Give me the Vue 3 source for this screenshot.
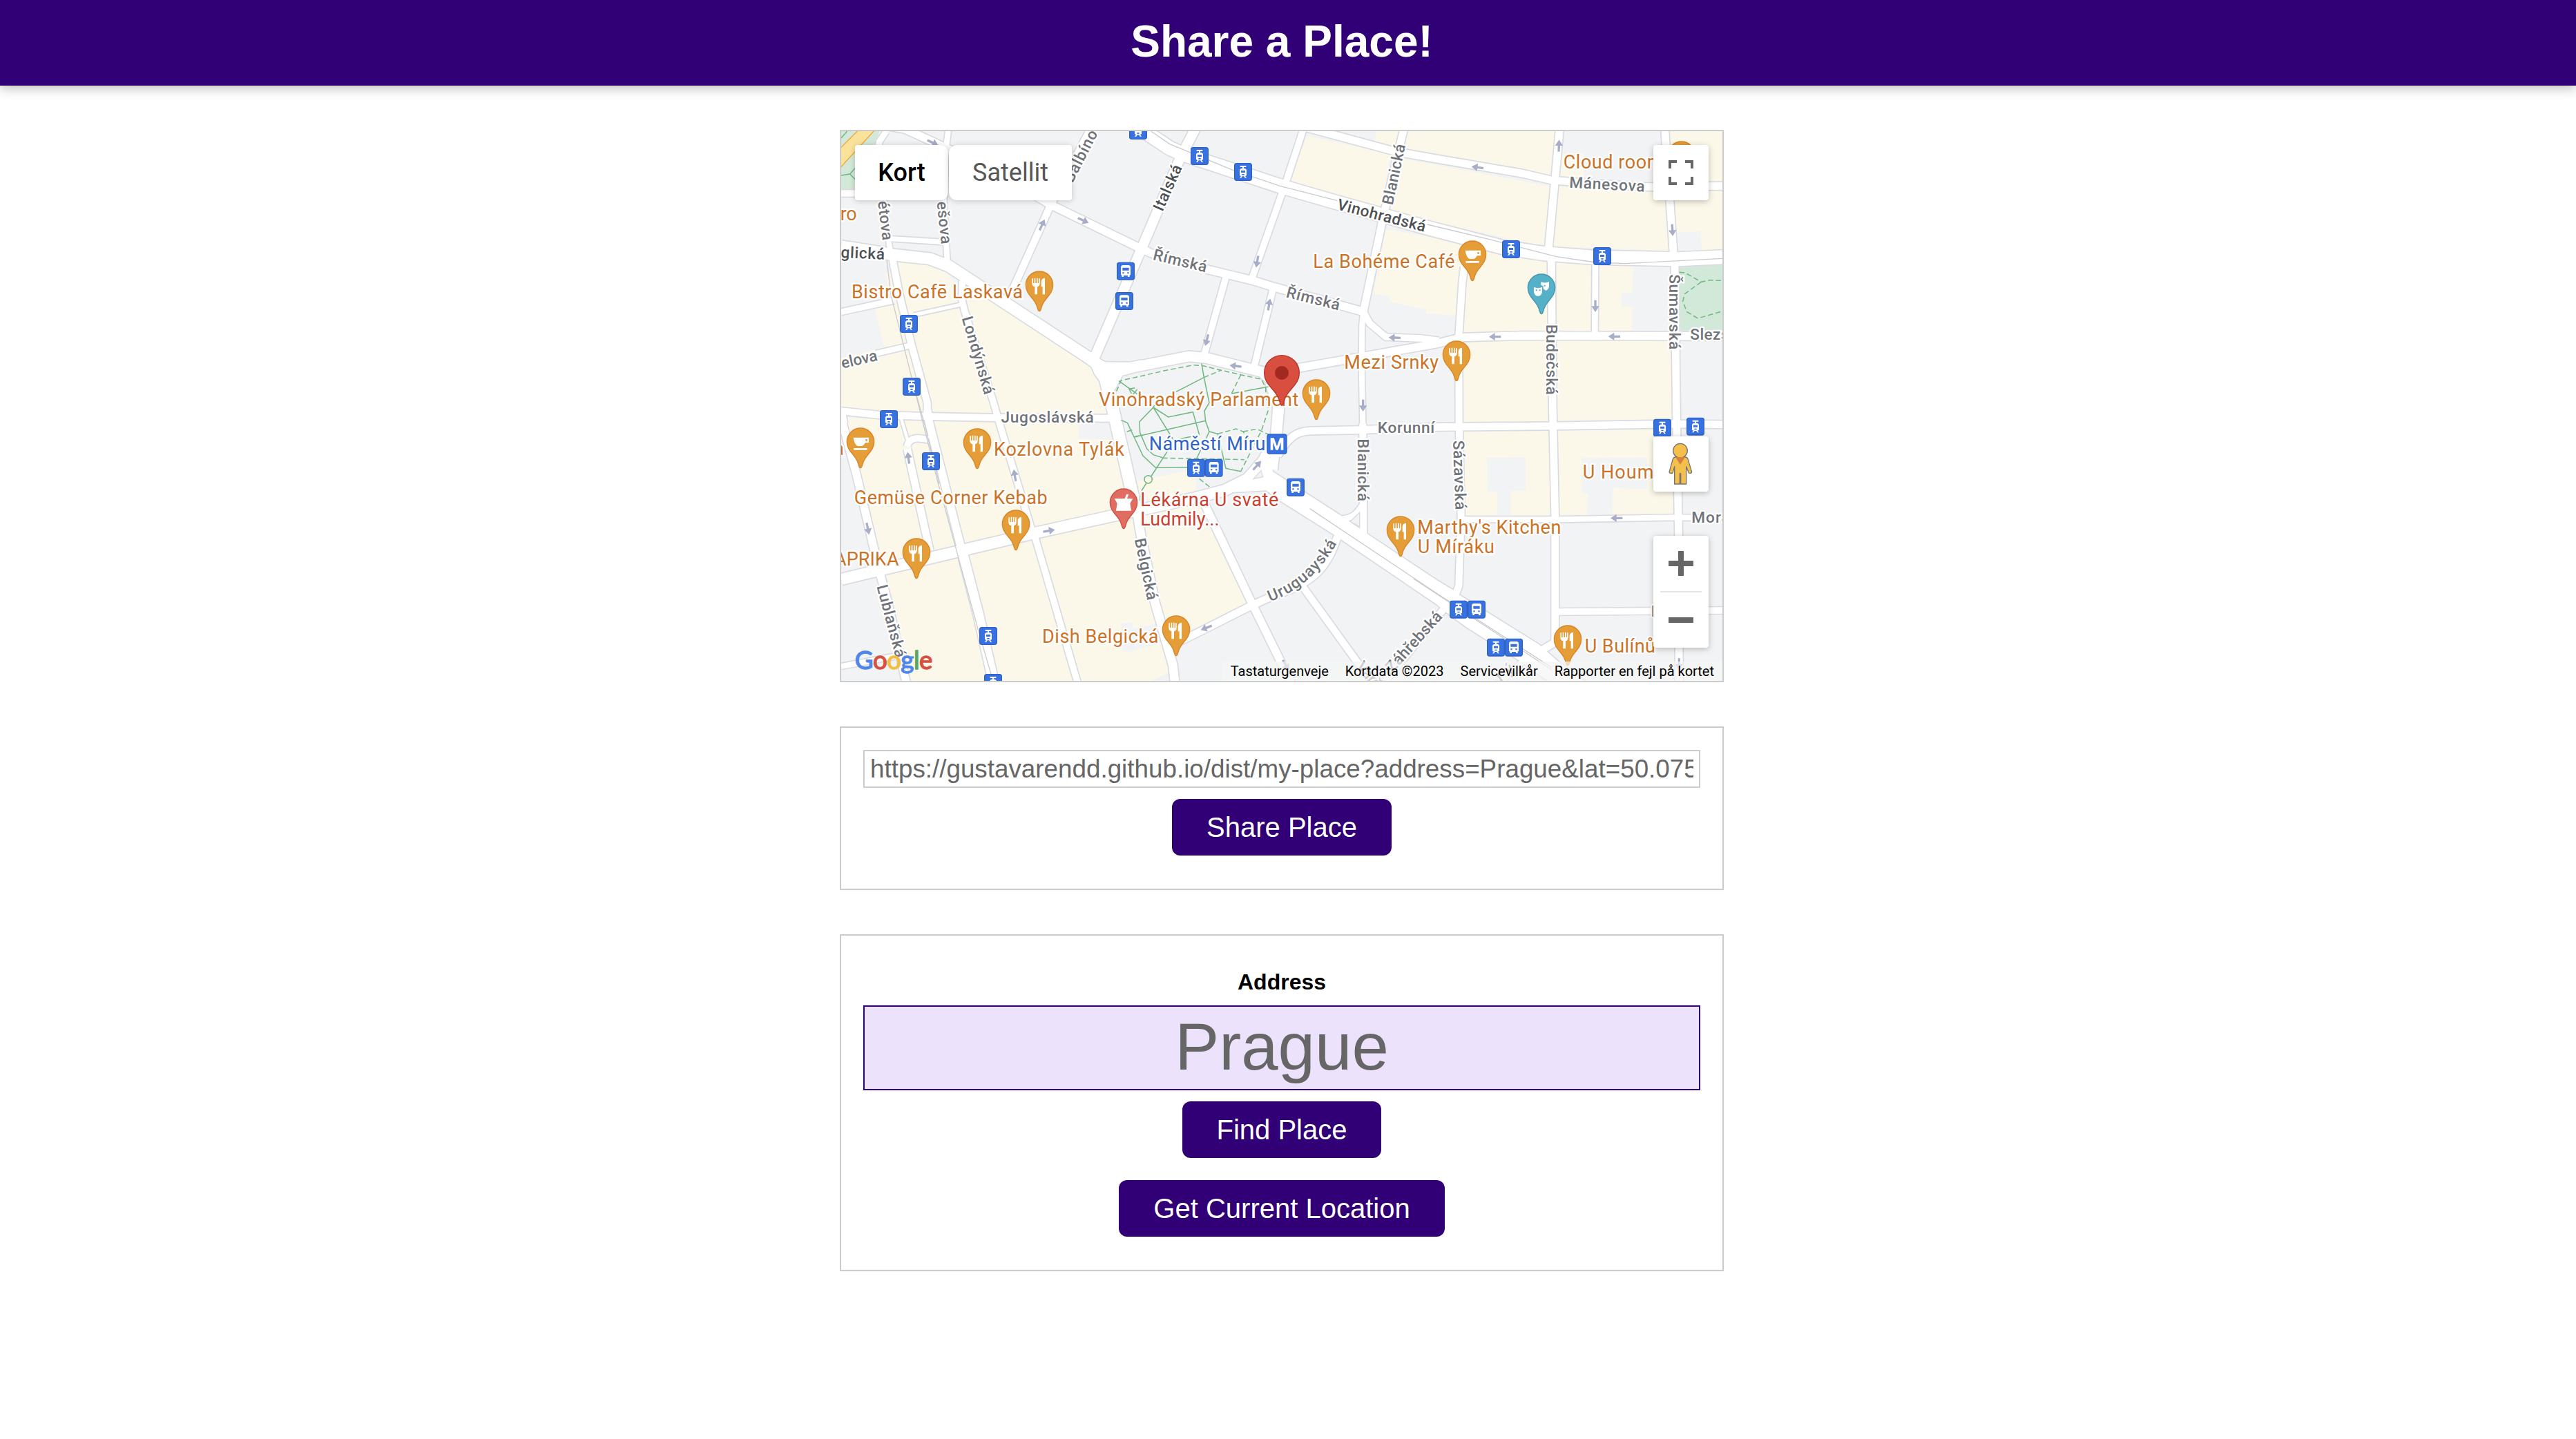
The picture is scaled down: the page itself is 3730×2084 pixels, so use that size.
<script setup>
import { ref } from 'vue'

const shareLink = ref('https://gustavarendd.github.io/dist/my-place?address=Prague&lat=50.0755381&lng=14.4378005')
const address = ref('Prague')

// Land use polygons: [kind, points]
const areas = [
  ['y', '265,598 405,612 480,637 520,700 560,690 1115,1060 1150,1130 1210,1260 1300,1650 1590,1640 1790,2075 1500,2225 1440,2270 1460,2340 1455,2380 1370,2418 300,2418 190,1960 150,1820 24,1300 24,1015 210,970 170,800 245,780 215,645 240,640'],
  ['y', '1310,1550 1530,1505 1565,1515 1565,1590 1320,1640'],
  ['y', '2050,50 2410,130 2370,370 1965,245'],
  ['y', '2350,30 2460,30 2440,110 2340,80'],
  ['y', '2490,30 3130,30 3105,230 2460,100'],
  ['y', '2440,145 3105,270 3080,530 2400,380'],
  ['y', '3140,270 3600,290 3640,550 3110,530'],
  ['y', '3140,130 3250,130 3250,240 3130,235'],
  ['y', '3620,30 3852,30 3852,255 3640,255'],
  ['y', '3640,285 3852,285 3852,545 3655,550'],
  ['y', '2390,455 2580,490 2880,560 3095,595 3090,900 2715,905 2695,832 2580,822 2565,825 2565,805 2405,770 2405,748 2335,735'],
  ['y', '3130,600 3280,612 3280,900 3130,900'],
  ['y', '3315,612 3465,618 3460,733 3415,733 3415,793 3460,793 3460,896 3315,896'],
  ['y', '2725,945 3097,940 3098,1297 2728,1297'],
  ['y', '3130,940 3635,940 3635,1285 3135,1292'],
  ['y', '2730,1335 3097,1332 3105,1697 2735,1697'],
  ['y', '3138,1330 3635,1325 3642,1693 3143,1697'],
  ['g', '24,30 190,30 165,120 85,282 24,282'],
  ['g', '3665,620 3852,610 3852,896 3670,896'],
  ['b', '3655,470 3758,465 3762,545 3658,550'],
  ['b', '2830,1448 2997,1446 2998,1593 2932,1593 2932,1697 2875,1697 2875,1597 2832,1597'],
  ['b', '3240,1450 3525,1448 3526,1585 3377,1580 3375,1697 3264,1697 3266,1602 3242,1602'],
  ['b', '24,1400 60,1320 100,1600 150,1820 180,1960 24,1960'],
  ['b', '24,2000 185,1965 300,2418 24,2418'],
  ['b', '1055,1300 1205,1292 1218,1370 1057,1365'],
  ['b', '1238,2172 1288,2162 1305,2285 1248,2296'],
  ['b', '1290,2190 1418,2165 1436,2250 1290,2285'],
  ['b', '50,1262 155,1268 155,1280 50,1275'],
]

// Streets: [inner width, path]
const roads = [
  [28, 'M24,300H110'],
  [26, 'M220,30 L190,75 L185,110'],
  [34, 'M240,10 L300,20 L500,112 L850,300 L935,350 L1305,530 L1370,560 L1620,632 L1810,678 L1900,706 L2295,815'],
  [24, 'M490,20 L480,100 L470,330 L485,600'],
  [22, 'M210,330 L232,520 L248,600'],
  [22, 'M235,497 L475,512'],
  [26, 'M24,815 L255,765'],
  [16, 'M340,828 L545,783'],
  [24, 'M175,996 L320,962'],
  [30, 'M248,590 L275,730 L330,960 L398,1210 L398,1260'],
  [34, 'M398,1240 L405,1290 L545,1840'],
  [44, 'M545,1840 L620,2130 L690,2440'],
  [30, 'M24,1246 L200,1264 L400,1269 L700,1275 L1200,1277'],
  [28, 'M550,680 L548,760 L560,810 L683,1200 L715,1310 L848,1750 L868,1800 L1055,2440'],
  [26, 'M30,1255 L38,1300'],
  [34, 'M30,1300 L90,1520 L175,1880 L195,1960 L225,2070 L310,2440'],
  [13, 'M285,1280 L312,1370'],
  [32, 'M311,1410 L408,1850'],
  [28, 'M311,1400 C315,1370 340,1364 360,1364 L405,1370'],
  [24, 'M24,2355 L290,2305'],
  [30, 'M1120,-5 L932,355 L757,745'],
  [42, 'M1562,20 L1495,150 L1333,530 L1125,1012'],
  [28, 'M2032,20 L1955,255 L1810,665'],
  [28, 'M1695,665 L1600,1005'],
  [28, 'M1900,715 L1815,1065'],
  [32, 'M2030,10 L2060,18 L2430,118 L2610,150 L2980,213 L3110,243 L3300,258 L3520,272 L3852,268'],
  [32, 'M2468,20 L2378,405 L2293,812'],
  [24, 'M2293,812 L2287,870 L2285,1050 L2290,1300'],
  [30, 'M2290,1300 L2293,1790'],
  [26, 'M2288,1655 C2260,1700 2240,1710 2200,1716'],
  [28, 'M2293,815 L2320,865 L2390,924 L2540,930 L2620,940'],
  [34, 'M1850,1073 L2015,1058 L2610,953 L2720,926 L2980,918 L3852,921'],
  [30, 'M2730,620 L2722,690 L2707,920 L2708,1300 L2717,1700 L2707,2005 L2690,2050'],
  [32, 'M3145,20 L3125,240 L3097,540 L3109,600 L3115,1230 L3125,1700 L3125,2250 L3060,2290'],
  [26, 'M3300,600 L3298,910'],
  [32, 'M3602,20 L3638,540 L3645,620 L3652,1230 L3662,1800 L3664,2440'],
  [32, 'M1920,1440 C1970,1350 2010,1335 2060,1332 L2270,1328 L2620,1315 L3100,1311 L3630,1302 L3852,1304'],
  [24, 'M2717,1717 L3140,1717 L3640,1708 L3852,1710'],
  [28, 'M3130,2118 L3852,2112'],
  [34, 'M1598,1640 L1808,2080 L1985,2440'],
  [32, 'M2180,1790 C2140,1920 2080,1985 1940,2035 C1800,2085 1700,2150 1450,2268'],
  [30, 'M2030,2010 L2290,2370 L2340,2440'],
  [30, 'M2650,2095 L2610,2145 L2370,2440'],
  [26, 'M2990,2330 L2870,2440'],
  [60, 'M1290,-10 L1340,30 L1450,103 L1510,130 L1930,268 L2160,335 L2580,452 L2900,535 L3080,562 L3290,578 L3660,586 L3852,577'],
  [50, 'M24,530 L215,560 L250,567 L408,584 L490,615 L1105,1018 L1160,1060'],
  [44, 'M1130,1055 L1290,1056 L1535,1008 L1610,1015 L1850,1075 L1890,1110'],
  [52, 'M1160,1060 L1205,1240 L1285,1590 L1300,1660'],
  [38, 'M1295,1600 L1325,1780 L1388,2080 L1465,2350 L1475,2440'],
  [48, 'M1890,1120 L1924,1230 L1915,1340 L1895,1500'],
  [48, 'M24,1977 L525,1857 L860,1777 L1290,1682 L1560,1624 L1690,1590 L1790,1540 L1860,1460 L1890,1400'],
]

// Wide intersections drawn as shapes
const plazas = [
  'M1880,1430 L1900,1510 L2195,1700 L2310,1780 L2610,1980 L2685,2025 L2710,2045 L3055,2260 L3100,2300 L3140,2335 L3270,2430 L3110,2430 L2970,2330 L2740,2185 L2645,2115 L2610,2085 L2160,1780 L1930,1635 L1870,1590 L1790,1595 L1700,1600 L1800,1520 Z',
  'M1105,990 L1145,1020 L1190,1042 L1240,1042 L1330,1024 L1330,1068 L1245,1092 L1215,1150 L1160,1170 L1150,1120 L1125,1085 L1110,1050 Z',
]

const rails = [
  'M222,590 L240,740 L365,1240 L440,1540 L530,1870 L620,2200 L690,2440',
  'M352,1180 L388,1310 L450,1560',
  'M1370,30 L1450,85 L1720,197 L1930,268 L2180,332 M2570,435 L2840,500 L3130,575 L3300,600 L3430,605 L3852,583',
  'M2060,1670 L2610,2037 L3110,2360',
  'M2512,1975 L2610,2040 L3110,2370',
]

const solidPaths = [
  'M24,60 L50,30 M24,222 L62,216 L85,190 M62,216 L85,240',
  'M1230,1115 L1310,1172 M1300,1145 L1275,1150 L1285,1170 M1310,1152 L1290,1175',
  'M1720,1170 L1880,1140 M1590,1040 L1600,1100 L1623,1210 L1602,1245 L1607,1290 L1623,1335 L1567,1455 M1600,1100 L1450,1177 L1375,1230',
  'M1380,1230 L1445,1272 L1552,1250 L1580,1350 L1468,1372 Z M1300,1358 L1608,1288 M1380,1230 L1320,1292 L1322,1340 L1352,1410 L1380,1436 L1420,1448',
  'M1240,1285 L1268,1298 L1285,1335 L1335,1440 L1390,1492 L1530,1490 M1445,1415 L1370,1530 M1265,1335 L1288,1328 M1298,1358 L1320,1352',
  'M1349,1560 L1330,1590 L1322,1635 M1375,1543 a17,17 0 1 0 -34,0 a17,17 0 1 0 34,0',
  'M1623,1335 L1660,1345 L1695,1495 L1760,1508',
]
const dashedPaths = [
  'M1220,1160 L1240,1113 L1300,1100 L1440,1068 L1555,1046 L1600,1050 L1680,1070 L1760,1088 L1850,1108 L1868,1145 L1870,1190 L1880,1240 L1850,1330 L1760,1508',
  'M1600,1100 L1675,1068 M1760,1088 L1720,1170',
  'M1420,1450 L1775,1457 M1660,1345 L1740,1323 L1770,1335 L1800,1380 M1770,1335 L1830,1324 L1890,1352 M1580,1540 L1630,1580',
  'M3665,643 L3690,645 L3760,685 L3795,677 L3852,679 M3760,685 L3688,737 L3680,770 L3698,815 L3745,843 L3842,815 L3852,825',
]

// One-way arrows: [x, y, angle]
const arrows = [
  [422, 80, 25], [1076, 418, 25], [897, 437, -65], [1831, 597, 100], [1883, 783, -80], [1612, 938, 105],
  [1737, 1050, 187], [2428, 927, 182], [3142, 93, -88], [2788, 187, 188], [3635, 460, 87], [3300, 790, 90],
  [2864, 923, 180], [3382, 922, 180], [2291, 1222, 90], [316, 1449, -98], [778, 1525, -100], [140, 1757, 78],
  [927, 1766, -10], [1831, 1482, -48], [1610, 2188, 158], [3392, 1711, 180], [3664, 2346, 90], [1955, 2350, 60],
]

// Street names centred on a point: [text, x, y, angle, length, major]
const streets = [
  ['étova', 217, 418, 83, 172], ['ešova', 473, 427, 84, 185], ['elova', 102, 1020, -13, 160],
  ['Londýnská', 620, 1003, 73.6, 350], ['Italská', 1441, 275, -66, 212, true], ['Blanická', 2424, 217, -78, 268],
  ['Vinohradská', 2372, 395, 14.5, 395, true], ['Římská', 1497, 592, 13.5, 238], ['Římská', 2075, 756, 14, 238],
  ['Mánesova', 3351, 260, 3, 328], ['Budečská', 3112, 1022, 90, 306], ['Šumavská', 3646, 815, 90, 327],
  ['Sázavská', 2711, 1524, 88, 302], ['Blanická', 2293, 1502, 90, 272], ['Korunní', 2478, 1316, 0, 247],
  ['Jugoslávská', 920, 1273, 0, 403], ['Belgická', 1350, 1932, 78, 272], ['Lublaňská', 243, 2158, 75, 324],
  ['Záhřebská', 2511, 2247, -48, 328], ['Balbíno', 1063, 137, -63, 245], ['glická', 118, 559, 2.5, 190, true],
  ['Slezs', 3796, 913, 0, 168], ['Mora', 3801, 1708, 0, 166], ['Varš', 2318, 2392, 50, 130], ['rý', 2905, 2380, -38, 80],
]

// Points of interest: [text, x, baseline, length, tone]
const places = [
  ['ro', 20, 417, 72], ['Bistro Cafē Laskavá', 69, 757, 744], ['Vinohradský Parlament', 1143, 1225, 868],
  ['La Bohéme Café', 2074, 625, 616], ['Mezi Srnky', 2209, 1061, 410], ['Cloud room', 3161, 193, 434],
  ['Kozlovna Tylák', 687, 1440, 567], ['Gemüse Corner Kebab', 80, 1651, 840], ['APRIKA', -6, 1918, 281],
  ['a', -8, 1436, 41], ['Dish Belgická', 897, 2254, 505], ["Marthy's Kitchen", 2527, 1779, 624],
  ['U Míráku', 2528, 1863, 334], ['U Houm', 3245, 1538, 308], ['U Bulínů', 3254, 2295, 307],
  ['Lékárna U svaté', 1324, 1659, 600, 'health'], ['Ludmily...', 1324, 1743, 343, 'health'],
  ['Náměstí Míru', 1361, 1416, 506, 'transit'],
]

const pins = [
  ['food', 885, 698], ['food', 2088, 1169], ['food', 2697, 1001], ['food', 615, 1382], ['food', 783, 1736],
  ['food', 351, 1859], ['food', 2454, 1763], ['food', 1479, 2195], ['food', 3180, 2237], ['food', 3674, 134],
  ['cafe', 2766, 566], ['cafe', 108, 1379], ['theatre', 3066, 710], ['pharmacy', 1251, 1643],
]

const stops = [
  ['tram', 318, 867], ['tram', 330, 1140], ['tram', 1314, 27], ['tram', 1581, 138], ['tram', 1770, 207],
  ['tram', 2934, 543], ['tram', 3330, 573], ['tram', 231, 1281], ['tram', 414, 1464], ['tram', 663, 2223],
  ['tram', 684, 2427], ['tram', 1566, 1493], ['tram', 3591, 1319], ['tram', 3735, 1313], ['tram', 2706, 2108],
  ['tram', 2868, 2273], ['bus', 1260, 638], ['bus', 1254, 768], ['bus', 1643, 1493], ['bus', 1998, 1577],
  ['bus', 2784, 2108], ['bus', 2946, 2273],
]

const logo = [['G', 'b'], ['o', 'r'], ['o', 'y'], ['g', 'b'], ['l', 'g'], ['e', 'r']]
const credits = ['Tastaturgenveje', 'Kortdata ©2023', 'Servicevilkår', 'Rapporter en fejl på kortet']
const pinShape = 'M0,114 C-5,114 -7,106 -9,98 C-18,56 -59,46 -59,0 A59,59 0 1 1 59,0 C59,46 18,56 9,98 C7,106 5,114 0,114Z'
</script>

<template>
  <div class="page">
    <header class="topbar"><h1>Share a Place!</h1></header>

    <main>
      <section class="map">
        <svg class="tiles" viewBox="24 30 3828 2388" width="1276" height="796">
          <defs>
            <path id="uruguayska" d="M1888,2074 C1990,2035 2100,1970 2200,1780" />
          </defs>
          <rect x="24" y="30" width="3828" height="2388" fill="#f1f3f4" />
          <polygon v-for="(a, i) in areas" :key="'a' + i" :points="a[1]" :class="'area-' + a[0]" />
          <path class="motorway" d="M10,114 L110,14 H180 L10,200Z" />

          <g class="casing">
            <path v-for="(r, i) in roads" :key="'c' + i" :d="r[1]" :stroke-width="r[0] + 10" />
            <path v-for="(p, i) in plazas" :key="'pc' + i" :d="p" stroke-width="10" />
          </g>
          <g class="street">
            <path v-for="(r, i) in roads" :key="'s' + i" :d="r[1]" :stroke-width="r[0]" />
          </g>
          <path v-for="(p, i) in plazas" :key="'p' + i" :d="p" fill="#fff" />
          <path class="island" d="M1815,1540 L1848,1505 L1856,1532Z M2236,1726 L2276,1686 V1748Z" />
          <path v-for="(r, i) in rails" :key="'r' + i" :d="r" class="rail" />
          <path v-for="(p, i) in solidPaths" :key="'gs' + i" :d="p" class="trail" />
          <path v-for="(p, i) in dashedPaths" :key="'gd' + i" :d="p" class="trail dashed" />

          <path v-for="(a, i) in arrows" :key="'w' + i" d="M-26,-5H0V-17L26,0L0,17V5H-26Z" fill="#a9aec8"
                :transform="`translate(${a[0]} ${a[1]}) rotate(${a[2]})`" />

          <text v-for="(s, i) in streets" :key="'n' + i" class="label street-name" :class="{ major: s[5] }"
                :transform="`translate(${s[1]} ${s[2]}) rotate(${s[3]})`" y="24" text-anchor="middle"
                :textLength="s[4]">{{ s[0] }}</text>
          <text class="label street-name"><textPath href="#uruguayska" textLength="392">Uruguayská</textPath></text>
          <text class="label street-name major" x="3543" y="2138">F</text>

          <text v-for="(p, i) in places" :key="'t' + i" class="label place" :class="p[4]" :x="p[1]" :y="p[2]"
                :textLength="p[3]">{{ p[0] }}</text>

          <g v-for="(s, i) in stops" :key="'b' + i" :transform="`translate(${s[1]} ${s[2]})`">
            <rect x="-37" y="-37" width="74" height="74" rx="9" class="stop" />
            <path v-if="s[0] === 'tram'" fill="#fff" fill-rule="evenodd"
                  d="M-13,-27H13V-21H3V-15H-3V-21H-13Z M-9,-15H9L15,-9V15L9,18L15,26H8L4,19H-4L-8,26H-15L-9,18L-15,15V-9Z M-9,-6V3H9V-6Z M-5,9V14H5V9Z" />
            <path v-else fill="#fff" fill-rule="evenodd"
                  d="M-14,-26H14Q21,-25 21,-17V17H17V25H9V19H-9V25H-17V17H-21V-17Q-21,-25 -14,-26Z M-14,-15V-3H14V-15Z M-14,5V11H-7V5Z M7,5V11H14V5Z" />
          </g>
          <g transform="translate(1917 1389)">
            <rect x="-42" y="-42" width="84" height="84" rx="10" class="stop" />
            <path d="M-28,26V-26H-13L0,10L13,-26H28V26H17V-8L5,26H-5L-17,-8V26Z" fill="#fff" />
          </g>

          <g v-for="(p, i) in pins" :key="'m' + i" :transform="`translate(${p[1]} ${p[2]})`">
            <path :d="pinShape" class="pin" :class="p[0]" />
            <path v-if="p[0] === 'food'" fill="#fff"
                  d="M-32,-28H-27V-8H-22V-30H-17V-8H-12V-30H-7V-8H-3V-28H2V-6Q2,4 -9,8V41H-20V8Q-32,4 -32,-6Z M24,-30V41H14V8H8V-14Q9,-29 24,-30Z" />
            <path v-else-if="p[0] === 'cafe'" fill="#fff" fill-rule="evenodd"
                  d="M-31,-18H36V5H20Q14,19 4,19H-12Q-26,14 -31,-18Z M22,-11V-2H29V-11Z M-29,28H29V36H-29Z" />
            <path v-else-if="p[0] === 'theatre'" fill="#fff" fill-rule="evenodd"
                  d="M-2,-25Q14,-18 33,-26V-5Q30,11 18,12L8,4V-6L-2,-12Z M-33,-2Q-16,5 3,-2V18Q0,36 -15,36Q-30,36 -33,18Z M-25,8V14H-19V8Z M-10,8V14H-4V8Z M11,-12V-6H17V-12Z" />
            <path v-else fill="#fff"
                  d="M-40,-17H5L12,-36H22L15,-17H40L28,4L33,36H-33L-28,4Z" />
          </g>

          <path d="M1938,1222 C1932,1222 1930,1208 1926,1196 C1912,1150 1862,1134 1862,1080 A76,76 0 1 1 2014,1080 C2014,1134 1964,1150 1950,1196 C1946,1208 1944,1222 1938,1222Z"
                fill="#d84f40" stroke="#b8352b" stroke-width="4" />
          <circle cx="1938" cy="1080" r="30" fill="#a3281f" />

          <text class="logo" x="83" y="2367" textLength="338"><tspan v-for="(l, i) in logo" :key="i" :class="l[1]">{{ l[0] }}</tspan></text>
        </svg>

        <div class="map-type">
          <button class="active">Kort</button>
          <button>Satellit</button>
        </div>

        <button class="control fullscreen" aria-label="Fullscreen">
          <svg width="36" height="36" viewBox="0 0 36 36" fill="none" stroke="#666" stroke-width="4">
            <path d="M2,12V2H12 M24,2H34V12 M34,24V34H24 M12,34H2V24" />
          </svg>
        </button>

        <div class="corner">
          <div class="control">
            <svg width="36" height="62" viewBox="0 0 108 186">
              <g fill="#f4bf4b" stroke="#737373" stroke-width="4" stroke-linejoin="round">
                <path d="M30,63H72Q82,63 85,74L101,128Q98,136 88,132L77,104V180H53V134H49V180H26V104L18,132Q6,136 3,128L18,74Q21,63 30,63Z" />
                <circle cx="51" cy="35" r="31" />
              </g>
              <path d="M30,63H72L51,96Z" fill="#d5833c" />
            </svg>
          </div>
          <div class="zoom">
            <button aria-label="Zoom in">
              <svg width="36" height="36" viewBox="0 0 36 36"><path d="M14,0H22V14H36V22H22V36H14V22H0V14H14Z" fill="#666" /></svg>
            </button>
            <hr>
            <button aria-label="Zoom out">
              <svg width="36" height="36" viewBox="0 0 36 36"><path d="M0,14H36V22H0Z" fill="#666" /></svg>
            </button>
          </div>
        </div>

        <div class="credits"><span v-for="c in credits" :key="c">{{ c }}</span></div>
      </section>

      <section class="panel share">
        <input v-model="shareLink" class="link" type="text" readonly>
        <button class="btn">Share Place</button>
      </section>

      <section class="panel finder">
        <label for="address">Address</label>
        <input id="address" v-model="address" class="address" type="text">
        <button class="btn">Find Place</button>
        <button class="btn">Get Current Location</button>
      </section>
    </main>
  </div>
</template>

<style>
body {
  margin: 0;
  background: #fff;
}
</style>

<style scoped>
.page {
  min-height: 2084px;
  font-family: "Liberation Sans", Arial, Helvetica, sans-serif;
}

.topbar {
  display: flex;
  align-items: center;
  justify-content: center;
  height: 124px;
  padding-right: 18px;
  box-sizing: border-box;
  background: #310076;
  box-shadow: 0 4px 16px rgba(0, 0, 0, 0.26);
}

h1 {
  margin: 0;
  padding-bottom: 4px;
  font-size: 64px;
  line-height: 74px;
  color: #fff;
}

main {
  display: flex;
  flex-direction: column;
  gap: 64px;
  width: 1280px;
  margin: 64px auto 0;
  padding-right: 18px;
}

.map,
.panel {
  box-sizing: border-box;
  width: 1280px;
  border: 2px solid #ccc;
}

.map {
  position: relative;
  height: 800px;
  overflow: hidden;
  font-family: Roboto, Arial, sans-serif;
}

.tiles {
  display: block;
}

.area-y { fill: #fcf8e9; }
.area-g { fill: #d2e8d8; }
.area-b { fill: #f1f3f4; }

.motorway {
  fill: #fbe29b;
  stroke: #f0a63a;
  stroke-width: 4;
}

.casing {
  fill: none;
  stroke: #dadbe1;
  stroke-linejoin: round;
}

.street {
  fill: none;
  stroke: #fff;
  stroke-linejoin: round;
}

.island {
  fill: #f1f3f4;
  stroke: #dadbe1;
  stroke-width: 4;
}

.rail {
  fill: none;
  stroke: #c9cbd0;
  stroke-width: 4;
}

.trail {
  fill: none;
  stroke: #71b781;
  stroke-width: 4.5;
}

.dashed {
  stroke-dasharray: 22 12;
}

.label {
  paint-order: stroke;
  stroke: #fff;
  stroke-width: 14px;
  stroke-linejoin: round;
}

.street-name {
  font-size: 68px;
  font-weight: 500;
  fill: #70747a;
}

.major {
  fill: #4d5156;
}

.place {
  font-size: 81px;
  fill: #cb7226;
}

.health { fill: #c9402f; }
.transit { fill: #2f63c9; }

.stop {
  fill: #3871e0;
  stroke: #2f62c6;
  stroke-width: 4;
}

.pin {
  fill: #e49d37;
  stroke: #d98528;
  stroke-width: 4;
}

.pin.theatre { fill: #54b1c8; stroke: #4596ab; }
.pin.pharmacy { fill: #e06d62; stroke: #d64b40; }

.logo {
  font-family: Lato, sans-serif;
  font-size: 110px;
  font-weight: 400;
  stroke-width: 4px;
}

.logo .b { fill: #4f86ec; stroke: #4f86ec; }
.logo .r { fill: #d8503f; stroke: #d8503f; }
.logo .y { fill: #f2bf42; stroke: #f2bf42; }
.logo .g { fill: #58a65c; stroke: #58a65c; }

button {
  margin: 0;
  padding: 0;
  border: 0;
  font: inherit;
}

.map-type {
  position: absolute;
  top: 20px;
  left: 20px;
  display: flex;
  gap: 1px;
}

.map-type button {
  width: 178px;
  height: 80px;
  border-radius: 12px 4px 4px 12px;
  background: #fff;
  box-shadow: 0 1px 8px rgba(0, 0, 0, 0.2);
  font-size: 36px;
  color: #565656;
}

.map-type .active {
  width: 135px;
  border-radius: 4px 12px 12px 4px;
  font-weight: 500;
  color: #000;
}

.control,
.zoom {
  display: flex;
  align-items: center;
  justify-content: center;
  width: 80px;
  border-radius: 4px;
  background: #fff;
  box-shadow: 0 2px 8px rgba(0, 0, 0, 0.25);
}

.control {
  height: 80px;
}

.fullscreen {
  position: absolute;
  top: 20px;
  right: 20px;
}

.corner {
  position: absolute;
  right: 20px;
  bottom: 48px;
  display: flex;
  flex-direction: column;
  gap: 64px;
}

.zoom {
  flex-direction: column;
}

.zoom button {
  display: flex;
  align-items: center;
  justify-content: center;
  width: 80px;
  height: 80px;
  background: none;
}

.zoom hr {
  width: 60px;
  height: 2px;
  margin: 0;
  border: 0;
  background: #e6e6e6;
}

.credits {
  position: absolute;
  right: 0;
  bottom: 0;
  display: flex;
  height: 28px;
  background: rgba(245, 245, 245, 0.7);
  font-size: 20px;
  line-height: 29px;
  color: #000;
}

.credits span {
  padding: 0 12px;
}

.panel {
  display: flex;
  flex-direction: column;
  align-items: center;
  padding: 32px;
}

.share {
  height: 237px;
}

.finder {
  height: 488px;
}

input {
  box-sizing: border-box;
  width: 1212px;
  margin: 0;
  border-radius: 0;
  font-family: inherit;
  color: #666;
  outline: none;
}

.link {
  height: 55px;
  padding: 0 8px;
  border: 2px solid #ccc;
  font-size: 36.8px;
}

.address {
  height: 123px;
  padding: 0 8px 3px;
  border: 2px solid #310076;
  background: #ede2fc;
  font-size: 96px;
  text-align: center;
}

label {
  margin: 17px 0 15px;
  font-size: 32px;
  font-weight: 700;
  line-height: 37px;
}

.btn {
  height: 82px;
  margin-top: 16px;
  padding: 0 50px;
  border-radius: 12px;
  background: #310076;
  font-size: 40px;
  color: #fff;
}

.btn + .btn {
  margin-top: 32px;
}
</style>
